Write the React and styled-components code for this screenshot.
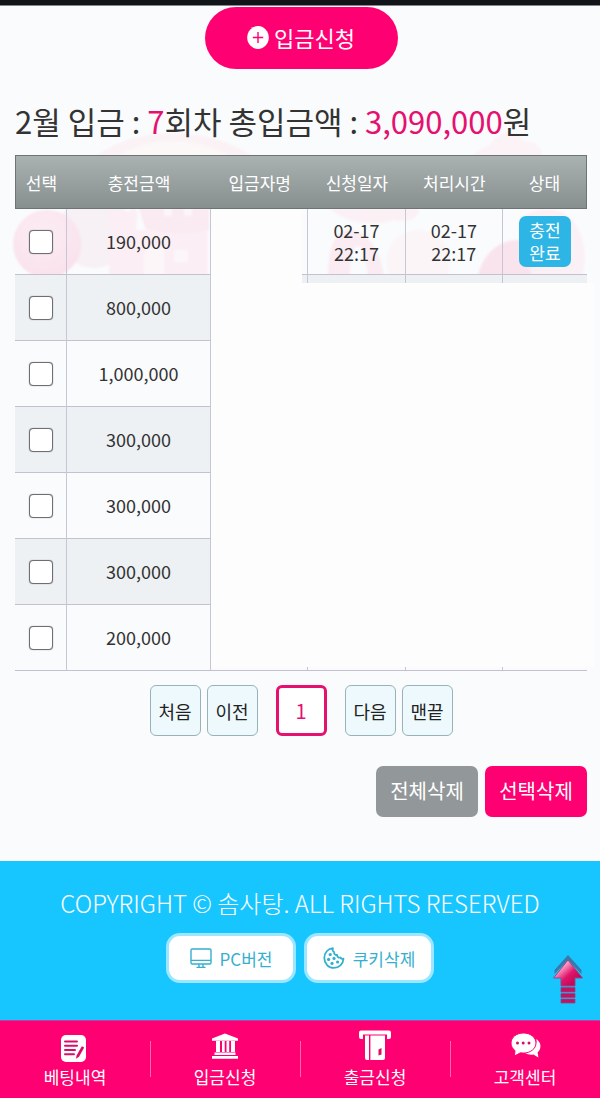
import React, { useState } from 'react';
import styled, { createGlobalStyle, css } from 'styled-components';

const GlobalStyle = createGlobalStyle`
  * {
    box-sizing: border-box;
  }
  body {
    margin: 0;
    background: #fafbfd;
    color: #333;
    font-family: 'Noto Sans CJK KR', 'Noto Sans', sans-serif;
  }
  button {
    font-family: inherit;
    cursor: pointer;
  }
`;

const Page = styled.div`
  position: relative;
  overflow: hidden;
`;

const TopStrip = styled.div`
  height: 6px;
  background: #111418;
  border-bottom: 1px solid #85868b;
`;

const Backdrop = styled.svg`
  position: absolute;
  top: 120px;
  left: 0;
  width: 100%;
  height: 160px;
`;

const Main = styled.main`
  position: relative;
  padding: 1px 13px 44px 15px;
`;

const DepositButton = styled.button`
  display: flex;
  align-items: center;
  justify-content: center;
  gap: 5px;
  width: 193px;
  height: 62px;
  margin: 0 auto;
  padding: 0 0 2px;
  border: none;
  border-radius: 31px;
  background: #ff0072;
  color: #fff;
  font-size: 22px;
  line-height: 32px;
`;

const Summary = styled.h1`
  margin: 29px 0 11px;
  font-size: 31px;
  line-height: 46px;
  font-weight: 400;
  white-space: nowrap;
`;

const Accent = styled.span`
  color: #e5106f;
`;

const TableWrap = styled.div`
  position: relative;
`;

const Table = styled.table`
  width: 100%;
  table-layout: fixed;
  border-collapse: separate;
  border-spacing: 0;
  text-align: center;
  font-size: 18px;
  line-height: 23px;
`;

const HeadRow = styled.tr`
  background: linear-gradient(#abb2b2, #868e8e);
`;

const HeadCell = styled.th`
  width: ${({ $width }) => $width || 'auto'};
  height: 54px;
  padding: 0;
  border: solid #6d7474;
  border-width: 1px 0;
  color: #fff;
  font-size: 17px;
  font-weight: 400;
  &:first-child {
    border-left-width: 1px;
  }
  &:last-child {
    border-right-width: 1px;
  }
`;

const Row = styled.tr`
  background: ${({ $shaded }) => ($shaded ? '#edf1f3' : 'transparent')};
`;

const Cell = styled.td`
  height: 66px;
  padding: 0;
  border-right: 1px solid #c5c8d4;
  border-bottom: 1px solid #c5c0d0;
  &:last-child {
    border-right: none;
  }
`;

const Checkbox = styled.input`
  appearance: none;
  display: block;
  width: 24px;
  height: 24px;
  margin: 0 auto;
  border: 1px solid #6e6e73;
  border-radius: 4px;
  background: #fff;
  box-shadow: 0 0 1px #767676;
  &:checked {
    background: #ff0072;
  }
`;

const Status = styled.span`
  display: block;
  width: 52px;
  margin: 0 auto;
  padding: 2px 0 3px;
  border-radius: 7px;
  background: #2db6e5;
  color: #fff;
  font-size: 17px;
`;

const Cover = styled.div`
  position: absolute;
  background: #fdfdfe;
  ${({ $kind }) =>
    $kind === 'name'
      ? css`
          top: 55px;
          left: 196px;
          width: 91px;
          height: 74px;
        `
      : css`
          top: 128px;
          left: 196px;
          right: -7px;
          bottom: 4px;
        `}
`;

const Pagination = styled.nav`
  display: flex;
  justify-content: center;
  gap: 6px;
  margin-top: 14px;
`;

const PageButton = styled.button`
  width: 51px;
  height: 51px;
  padding: 0;
  border-radius: 6px;
  font-size: 18px;
  line-height: 26px;
  ${({ $current }) =>
    $current
      ? css`
          margin: 0 12px;
          border: 3px solid #e5106f;
          background: #fff;
          color: #e5106f;
          font-size: 20px;
        `
      : css`
          border: 1px solid #97b3b9;
          background: #edf9fc;
          color: #222;
        `}
`;

const Actions = styled.div`
  display: flex;
  justify-content: flex-end;
  gap: 7px;
  margin-top: 30px;
`;

const ActionButton = styled.button`
  width: 102px;
  height: 51px;
  padding: 0 0 2px;
  border: none;
  border-radius: 7px;
  background: ${({ $primary }) => ($primary ? '#ff0072' : '#929799')};
  color: #fff;
  font-size: 20px;
`;

const Footer = styled.footer`
  position: relative;
  padding: 24px 0 37px;
  background: #18c6ff;
  text-align: center;
`;

const Copyright = styled.p`
  margin: 0 0 12px;
  color: #fff;
  font-size: 24px;
  line-height: 36px;
  font-weight: 300;
  white-space: nowrap;
`;

const FooterButtons = styled.div`
  display: flex;
  justify-content: center;
  gap: 8px;
`;

const FooterButton = styled.button`
  display: flex;
  align-items: center;
  justify-content: center;
  gap: 8px;
  width: 130px;
  height: 50px;
  padding: 0;
  border: 3px solid #9ce7ff;
  border-radius: 14px;
  background: #fff;
  color: #35afd0;
  font-size: 17px;
`;

const TopLink = styled.a`
  position: absolute;
  right: 15px;
  bottom: 16px;
  display: block;
  width: 34px;
  height: 50px;
`;

const BottomNav = styled.nav`
  display: flex;
  border-top: 1px solid #c63fa3;
  border-bottom: 1px solid #8e0a49;
  background: #ff0072;
`;

const NavLink = styled.a`
  display: flex;
  flex: 1;
  flex-direction: column;
  align-items: center;
  gap: 2px;
  padding: 9px 0 8px;
  color: #fff;
  font-size: 17px;
  line-height: 26px;
  text-decoration: none;
  background: ${({ $divided }) =>
    $divided ? 'linear-gradient(#ff6cab, #ff6cab) left 20px / 1px 36px no-repeat' : 'none'};
`;

const PlusIcon = () => (
  <svg width="22" height="24" viewBox="0 0 22 24" aria-hidden="true">
    <ellipse cx="11" cy="12.500" rx="10.800" ry="11.400" fill="#fff" />
    <path d="M11 7v11M5.800 12.500h10.400" stroke="#ff0072" strokeWidth="1.400" />
  </svg>
);

const MonitorIcon = () => (
  <svg width="22" height="22" viewBox="0 0 22 22" fill="none" stroke="currentColor" strokeWidth="1.4" aria-hidden="true">
    <rect x="1" y="2" width="20" height="15" rx="1.2" />
    <path d="M1 13.4h20M9 17.2v3M13 17.2v3M6.5 20.4h9" />
  </svg>
);

const CookieIcon = () => (
  <svg width="22" height="22" viewBox="0 0 22 22" aria-hidden="true">
    <path
      d="M10 1.2C5 1.5 1.3 5.800 1.300 11c0 5.500 4.200 9.900 9.500 9.900 5.200 0 9.300-3.800 9.700-9.200-1.200.5-2.400 0-3-1.200-1.700.6-3.500-.7-3.400-2.500-2 .2-3.300-1.200-2.900-2.900C9.700 4.500 9.300 2.700 10 1.200z"
      fill="none"
      stroke="currentColor"
      strokeWidth="1.8"
      strokeLinejoin="round"
    />
    <g fill="currentColor">
      <circle cx="7.200" cy="7.600" r="1.600" />
      <circle cx="5.600" cy="12.400" r="1.600" />
      <circle cx="11" cy="11.400" r="1.600" />
      <circle cx="9" cy="16.400" r="1.600" />
      <circle cx="14.600" cy="15" r="1.600" />
    </g>
  </svg>
);

const ArrowIcon = () => (
  <svg width="34" height="50" viewBox="0 0 34 50" aria-hidden="true">
    <defs>
      <linearGradient id="arrowFill" x1="0" y1="0" x2="1" y2="1">
        <stop offset="0.25" stopColor="#ffb0d0" />
        <stop offset="0.55" stopColor="#e0146c" />
        <stop offset="1" stopColor="#a3003f" />
      </linearGradient>
    </defs>
    <path d="M17 1 3.500 16v4L17 6l13.500 14v-4z" fill="#3a78a8" />
    <path d="M17 6 2.500 24H10v8h14v-8h7.500z" fill="url(#arrowFill)" stroke="#8d4a8c" strokeWidth="1" />
    <path d="M10 33.500h14v4.500H10zM10 39.500h14v4H10zM10 45h14v4H10z" fill="#c4125f" stroke="#7f4d90" strokeWidth=".8" />
  </svg>
);

const HistoryIcon = () => (
  <svg width="36" height="32" viewBox="0 0 36 32" aria-hidden="true">
    <rect x="4" y="5" width="25" height="27" rx="5" fill="#fff" />
    <path d="M8 11.500h12M8 15.800h12M8 20h10M8 24.300h9" stroke="#d80f67" strokeWidth="2" strokeLinecap="round" />
    <path d="m24.800 16.200 2.400 1.300-5.200 9.300-3 2 .6-3.400z" fill="#d80f67" />
  </svg>
);

const BankIcon = () => (
  <svg width="36" height="32" viewBox="0 0 36 32" fill="#fff" aria-hidden="true">
    <path d="M18 3.500 31 8.500v2.300H5V8.500zM9 11h4v11H9zM15 11h2.700v11H15zM19.500 11h2.700v11h-2.700zM24 11h4v11h-4zM7.500 22.500h21V25h-21zM5 26h26v2.800H5z" />
  </svg>
);

const WithdrawIcon = () => (
  <svg width="36" height="32" viewBox="0 0 36 32" aria-hidden="true">
    <path d="M4 .5h28a2 2 0 0 1 2 2V7a2 2 0 0 1-2 2h-2V4.500H6V9H4a2 2 0 0 1-2-2V2.500a2 2 0 0 1 2-2z" fill="#fff" />
    <path d="M8 5.500h4V30h-2a2 2 0 0 1-2-2zM13.400 5.500H28V28a2 2 0 0 1-2 2H13.400z" fill="#fff" />
    <path d="M21.500 19.500 24.500 18v6.500l-3 1z" fill="#d80f67" />
  </svg>
);

const ChatIcon = () => (
  <svg width="36" height="32" viewBox="0 0 36 32" aria-hidden="true">
    <path d="M29.500 9c3 2.400 4.500 5.400 3.800 8.700-.4 2-1.500 3.500-2.700 4.600l.8 5.200-5-3c-3 .5-6 0-8.400-1.500C25 21.800 30 16.500 29.500 9z" fill="#fff" />
    <path d="M16.500 3C9.500 3 4 7.300 4 13c0 3.300 1.600 5.800 4 7.600L7.500 26l6-3.200c1 .2 2 .3 3 .3C23.500 23.100 29 18.600 29 13S23.500 3 16.500 3z" fill="#fff" stroke="#ff0072" strokeWidth="1" />
    <g fill="#d80f67">
      <circle cx="10.500" cy="13" r="1.500" />
      <circle cx="16.200" cy="13" r="1.500" />
      <circle cx="22" cy="13" r="1.500" />
    </g>
  </svg>
);

const Scenery = () => (
  <Backdrop viewBox="0 0 600 160" preserveAspectRatio="xMidYMin slice" aria-hidden="true">
    <defs>
      <filter id="soft">
        <feGaussianBlur stdDeviation="1.200" />
      </filter>
      <radialGradient id="ball" cx="0.45" cy="0.35" r="0.7">
        <stop offset="0" stopColor="#fcedf3" />
        <stop offset="1" stopColor="#f9e0ec" />
      </radialGradient>
    </defs>
    <g filter="url(#soft)">
      <path d="M88 44C124 4 216 2 262 44z" fill="#fbf2f5" />
      <path d="M108 44C138 14 204 12 240 44z" fill="#fcf8f7" />
      <path d="M472 40c2-12 14-10 20-18 8-12 26-12 32 0 12-2 20 8 18 18z" fill="#fbf3f6" />
      <circle cx="94" cy="112" r="36" fill="#f7f0f5" />
      <circle cx="47" cy="124" r="34" fill="url(#ball)" />
      <path d="M107 92l6-4 4 4 5-5 6 5 5-5 5 5-2 18h10V84h62v72h-99v-30l5-8z" fill="#fbeff5" />
      <path d="M139 88h70v22c-24 6-46 4-64-2z" fill="#faeaf2" />
      <path d="M164 86h8v10h-8zM184 86h8v10h-8z" fill="#fcf6f9" />
      <path d="M148 126h16v30h-20v-20zM174 130h14v12h-14z" fill="#fcf6f9" />
      <path d="M330 88h88c4 8-8 16-24 12-24 8-52 2-64-12z" fill="#fbf1f5" />
      <path d="M328 156c0-30 8-46 22-46s30 16 34 46h-16c-2-20-6-30-10-30s-8 10-8 30z" fill="#faecf2" />
      <circle cx="418" cy="142" r="32" fill="#fbf5f8" />
      <path d="M478 156c6-30 34-44 60-32 22 10 18 32 18 32z" fill="#f9e4ed" />
      <path d="M518 106c6-18 38-24 54-6 12 14 16 34 10 56h-50z" fill="#fbf0f5" />
    </g>
  </Backdrop>
);

const columns = [
  { label: '선택', width: '52px' },
  { label: '충전금액', width: '144px' },
  { label: '입금자명' },
  { label: '신청일자' },
  { label: '처리시간' },
  { label: '상태', width: '84px' },
];

const deposits = [
  { id: 1, amount: '190,000', date: '02-17', time: '22:17' },
  { id: 2, amount: '800,000' },
  { id: 3, amount: '1,000,000' },
  { id: 4, amount: '300,000' },
  { id: 5, amount: '300,000' },
  { id: 6, amount: '300,000' },
  { id: 7, amount: '200,000' },
];

const navItems = [
  { label: '베팅내역', icon: <HistoryIcon /> },
  { label: '입금신청', icon: <BankIcon /> },
  { label: '출금신청', icon: <WithdrawIcon /> },
  { label: '고객센터', icon: <ChatIcon /> },
];

const App = () => {
  const [selected, setSelected] = useState([]);

  const toggle = (id) => {
    setSelected((prev) => (prev.includes(id) ? prev.filter((x) => x !== id) : [...prev, id]));
  };

  return (
    <Page>
      <GlobalStyle />
      <TopStrip />
      <Scenery />
      <Main>
        <DepositButton type="button">
          <PlusIcon />
          입금신청
        </DepositButton>
        <Summary>
          2월 입금 : <Accent>7</Accent>회차 총입금액 : <Accent>3,090,000</Accent>원
        </Summary>
        <TableWrap>
          <Table>
            <thead>
              <HeadRow>
                {columns.map((col) => (
                  <HeadCell key={col.label} $width={col.width}>{col.label}</HeadCell>
                ))}
              </HeadRow>
            </thead>
            <tbody>
              {deposits.map((item, i) => (
                <Row key={item.id} $shaded={i % 2 === 1}>
                  <Cell>
                    <Checkbox
                      type="checkbox"
                      aria-label={item.amount}
                      checked={selected.includes(item.id)}
                      onChange={() => toggle(item.id)}
                    />
                  </Cell>
                  <Cell>{item.amount}</Cell>
                  <Cell />
                  <Cell>{item.date}<br />{item.time}</Cell>
                  <Cell>{item.date}<br />{item.time}</Cell>
                  <Cell>{item.date && <Status>충전<br />완료</Status>}</Cell>
                </Row>
              ))}
            </tbody>
          </Table>
          <Cover $kind="name" />
          <Cover $kind="rest" />
        </TableWrap>
        <Pagination>
          <PageButton type="button">처음</PageButton>
          <PageButton type="button">이전</PageButton>
          <PageButton type="button" $current>1</PageButton>
          <PageButton type="button">다음</PageButton>
          <PageButton type="button">맨끝</PageButton>
        </Pagination>
        <Actions>
          <ActionButton type="button">전체삭제</ActionButton>
          <ActionButton type="button" $primary onClick={() => setSelected([])}>선택삭제</ActionButton>
        </Actions>
      </Main>
      <Footer>
        <Copyright>COPYRIGHT © 솜사탕. ALL RIGHTS RESERVED</Copyright>
        <FooterButtons>
          <FooterButton type="button"><MonitorIcon />PC버전</FooterButton>
          <FooterButton type="button"><CookieIcon />쿠키삭제</FooterButton>
        </FooterButtons>
        <TopLink href="#root" aria-label="맨 위로"><ArrowIcon /></TopLink>
      </Footer>
      <BottomNav>
        {navItems.map((item, i) => (
          <NavLink key={item.label} href="#root" $divided={i > 0}>
            {item.icon}
            {item.label}
          </NavLink>
        ))}
      </BottomNav>
    </Page>
  );
};

export default App;
